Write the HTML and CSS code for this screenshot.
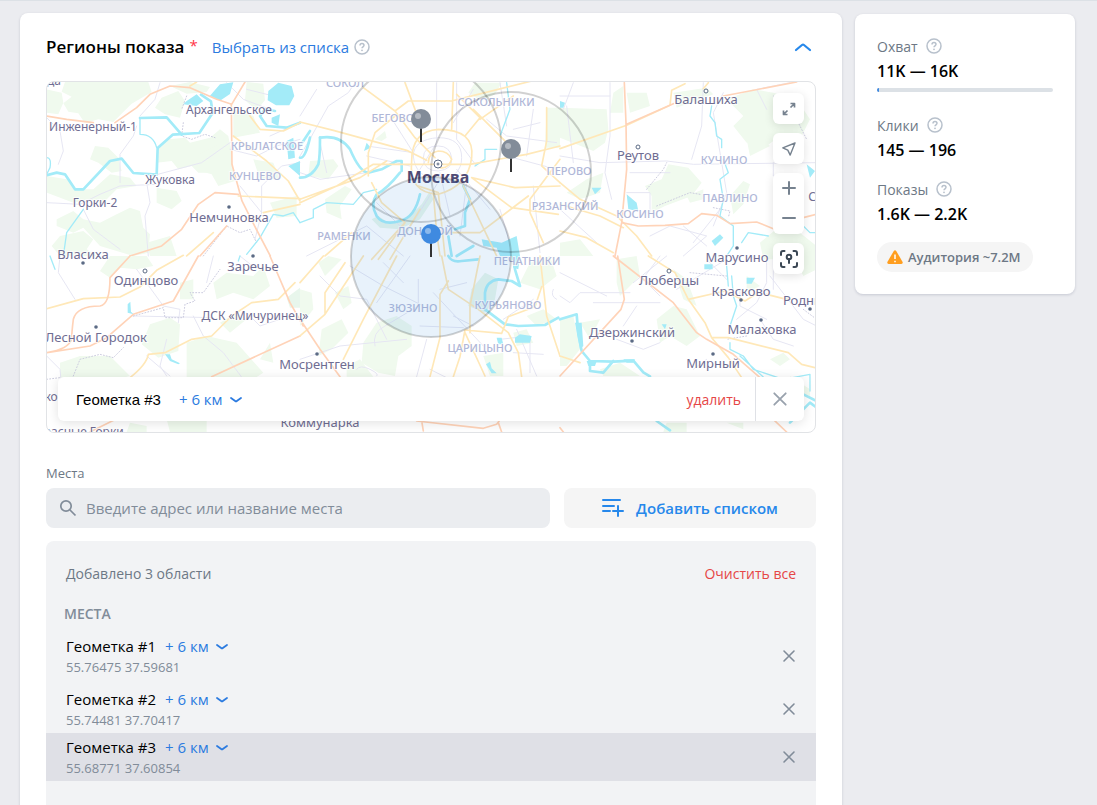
FILE: index.html
```html
<!DOCTYPE html>
<html lang="ru">

<head>
    <meta charset="UTF-8">
    <meta name="viewport" content="width=device-width, initial-scale=1.0">
    <title>Регионы показа</title>
    <link rel="stylesheet" href="styles.css">
</head>

<body>
    <!-- shared icons -->
    <svg class="sprite" width="0" height="0" aria-hidden="true">
        <symbol id="help" viewBox="0 0 16 16">
            <circle cx="8" cy="8" r="7" fill="none" stroke="currentColor" stroke-width="1.5" />
            <path d="M6 6.4C6 5.2 6.9 4.5 8 4.5s2 .7 2 1.8c0 1.5-2 1.5-2 3" fill="none" stroke="currentColor" stroke-width="1.5" />
            <circle cx="8" cy="11.3" r=".9" fill="currentColor" />
        </symbol>
        <symbol id="chevron" viewBox="0 0 12 8">
            <path d="M1 2l4.2 3q.8.6 1.6 0L11 2" fill="none" stroke="currentColor" stroke-width="1.8" stroke-linecap="round" />
        </symbol>
        <symbol id="cross" viewBox="0 0 14 14">
            <path d="M2 2l10 10M12 2L2 12" fill="none" stroke="currentColor" stroke-width="1.6" stroke-linecap="round" />
        </symbol>
    </svg>

    <div class="page">
        <main class="card regions">
            <header class="regions-head">
                <h1>Регионы показа</h1>
                <span class="required">*</span>
                <a href="#list" class="pick">Выбрать из списка</a>
                <button type="button" class="help" aria-label="Справка"><svg><use href="#help" /></svg></button>
                <button type="button" class="collapse" aria-label="Свернуть">
                    <svg viewBox="0 0 18 10"><path d="M2 8l6-5q1-.8 2 0l6 5" fill="none" stroke="currentColor" stroke-width="2.2" stroke-linecap="round" /></svg>
                </button>
            </header>

            <div class="map">
                <svg class="map-canvas" viewBox="1 1 768 350" preserveAspectRatio="xMidYMid slice">
                    <!-- tile 0:0 -->
                    <g transform="translate(-6 -5) scale(.3333)">
                        <g class="park">
                            <path d="M75 18h250l10 30-60 35-55 55-45-8-40 12-20-30-30-5-15-25 25-20-30-15z" />
                            <path d="M20 40l45 10 5 30-15 35-35-5zM165 210l40 5 30 30 10 40-30 5-40-30-25-10z" />
                            <path d="M365 65l50-20 20 30-15 50-45-10-30-20zM390 30l60-12 60 15-10 15-60 5z" />
                            <path d="M355 215l30-25 50-5 15 15 60-15 30-25 25 20 10 50-30 20-20 40-50 0-20-20-40 10-20-25-45 5z" />
                            <path d="M475 235l60-30 35 0 15 110-50 15-20-35-35-10zM580 100l60 20 20 50-80 15z" />
                            <path d="M620 18l50 5 5 50-25 30-35-30zM640 250l60 10 20 50-60 0zM690 380l80-20v60l-60 5z" />
                            <path d="M20 300l60 10 30 30 50 0 50-45 60 10 20 25-60 10-40 40-40-10-50 10-80-30z" />
                            <path d="M50 430l50-25 30 25 50 10 50-25 40-20 30 10 10 50 20 20-5 55-45 10-100-30-50-55-30 15-50-20z" />
                            <path d="M60 480l70-15 30 25-20 30 30 20h-110l-25-30zM350 335l60 10 15 30-30 25-45-20zM320 500l70-20 20 60h-80z" />
                        </g>
                        <g class="lane">
                            <path d="M20 125l40 40 10 60-15 40M300 120l45-50 15-50M240 320v-85l40-55 10-30M20 380l100 5 60-30 60-25 110-5M335 300l150-40 85-60M320 320l10 60-15 40 10 120M130 400l30 60 80 60M570 220l80 20 60-30 70-20M620 40l80 20M665 410v-80l60-60 55-10M690 180l90-40M600 330l65 80-20 80M560 20l50 50 80 30" />
                        </g>
                        <path class="lane dotted" d="M430 140l-5 40 30 10 40-15 30 10M440 60l-15 40M490 540l70-90 40 20 30-10 20 40" />
                        <g class="river">
                            <path d="M20 298l30-8 25 5 30 45h25l80-85 35-7 35 43 70 5 3-80 45-40 80-5 40-60-5-35-30-20" />
                            <path d="M780 140l-40 15-60-5-20-30 15-20 30 5" />
                        </g>
                        <path class="river small" d="M350 215q-10-40-50-40v-45" />
                        <path class="river" d="M300 126l80-2 45 52" />
                        <path class="river small" d="M130 400l-50 70-10 70M20 245q15 0 10 30l-10 20M780 440l-20-30-30 10-30-5-40 70-40 50" />
                        <g class="water">
                            <path d="M685 45l30-25 40 10 8 30-15 28-40 0-25-15zM540 25l40-6-10 35-30 20-30-15zM440 75l30-20 20 20-20 15-40-5zM695 125l25-10-5 35-20-10zM740 195l20-10 5 60-20 5zM745 270l35-15v45z" />
                        </g>
                        <g class="road-yellow">
                            <path d="M580 180l100 75 65 60 35 60M595 360l185 8M630 120l30 40 70 5 50-25M670 410l110-25M440 540l80-70M450 30l20-12" />
                        </g>
                        <g class="road">
                            <path d="M20 120l60 10 80 10M225 140l65-45 40-40 60-25 60 5 80 35 45 15 40-67M574 85l2 180 30 110 30 60 55 105M595 355l-70-5-50 35-50 75-60 50-95 30M560 450l-80 90" />
                        </g>
                    </g>
                    <!-- tile 1:0 -->
                    <g transform="translate(254 -5) scale(.3333)">
                        <g class="park">
                            <path d="M505 50l20-30h80l-20 35-40 20zM740 95h40v120h-45zM30 255l70-5 15 20-30 40-60-10zM75 370l60-40 20 10-35 50 5 40-45-20z" />
                            <path d="M225 190l30-25 5 20-15 10z" />
                        </g>
                        <path class="park deep" d="M215 430l20-10 30 20 50-5 50-50 25-40 10 25-40 60-60 30-60-5z" />
                        <g class="lane">
                            <path d="M0 240l35-60 50-90 60-40 20-30M0 120l50-80M410 20v180l-50 80M470 20v170l60 80M340 240q0-50 75-55 70 0 70 60t-70 65q-70-5-75-70zM370 245q0-35 45-35 35 0 40 35t-40 40q-45 0-45-40z" />
                            <path d="M200 210l140 20M600 20l20 130M560 130l60 50 150 20M620 240l150 40M460 140l60-100M270 120l70 110M200 240l130 30M0 290l60 20 140-20M640 160l80-20M700 100l-20 140M60 200l20 90M420 290l30 130M470 280l100 120M230 380l100 100M420 310l-100 160M500 320l-20 160M20 540l180-90 110 90M600 400l40 140M700 330l20 200" />
                        </g>
                        <g class="river">
                            <path d="M0 210l30-45M30 185q-15 65-30 60M60 185q60-10 90 35 30 70 55 70l40-10 45-25h15v30M300 290q-40 50-70 65-20 30 0 65 20 30 70 15 45-10 60-80M490 330l20 40-15 40v40l-30 10" />
                            <path d="M60 185q0 60-5 80-20 40-55 40M445 480l10 60M470 540l50-30" />
                        </g>
                        <path class="river small" d="M0 440l40-15 0-25 40-20 80 5 30-35 40-10M620 20l10 80-30 80M590 220h-35v30l-30 20" />
                        <path class="water" d="M545 490l60 10 45-20 10 60h-60l-10-25-40-5zM200 200l12 15-20 10z" />
                        <g class="road-yellow">
                            <path d="M0 138l100 25 220 60 60 30M190 35l95 70 40-30h130l40-10 200-50M285 105l60 80 60 60M360 140l-45-120M460 20l-5 140" />
                            <path d="M335 255q0-90 80-95 110 0 100 85t-100 110q-90-5-80-100zM385 260q0-30 30-35 30 0 40 25-10 30-35 25" />
                            <path d="M0 380l110-50 110-65 110 0 180 0 170-30 100-25M0 370l180-65 80-50M205 300l0-70 20-60 60-50M520 100l100 100M470 55l70 70-45 55M640 60l-100 70M740 95l0 100-15 75 55 50M780 250l-90 120 0 40 40 90M515 305l120 90 140 20M515 305l130 30 135-5M215 320l30 60 70 60-100 110M400 350l10 120 10 70M355 330l60 20 20 190M315 440l-80 110M360 400l-90 150M540 470l145-110M430 470l110 0M75 540l80-70M490 330l100 210" />
                        </g>
                    </g>
                    <!-- tile 2:0 -->
                    <g transform="translate(514 -5) scale(.3333)">
                        <g class="park">
                            <path d="M0 95l140 5 5 60-10 40-35 25-100-40zM20 350l60-40 50-20-10 60-60 20zM160 50l30-20v80l-40 0zM200 50l60 0 10 40-60 20z" />
                            <path d="M255 330l50-20 20-45 60 10 40 45-30 40-80 30-40 20 0-50zM340 50l100-15 20 20-110 40z" />
                            <path d="M500 70l80-30 60 10 70 20 40 60-30 60-60-10-40 30-60-10-40-50 30-30zM510 360l40-45 20 10-20 60-30 30zM560 190l30-20 40 40-60 30z" />
                            <path d="M0 500l60-10 40 50h-100zM600 500l60-50 60 20 50 40v40h-160zM380 360l50-20v30l-40 10z" />
                        </g>
                        <g class="lane">
                            <path d="M0 60l150 0M40 20l-30 80M20 90l20 170M150 20v160l-15 110 20 80M0 240l120 20 200-5 80 10 370-5M430 20l-5 130-30 100M490 50l-30 60 40 240-40 100M210 290l120 0M0 400l110 100M370 450l70 60M640 260v40h50M200 350h70v60M620 100l-30-60 100-20M400 500l80-100M270 480l60-30 110 30-70 60" />
                        </g>
                        <path class="lane dotted" d="M260 340l50-60 10-20M290 390l100-40 30 5M460 395l50 10-5 20M640 60l60 50 40 80" />
                        <path class="river small" d="M455 90l-5 30 15 20 5 40 15 10v25M490 250l15 40-25 20 10 60-10 50 40 30 0 60-20 30M545 500l20-30 60 10M730 450l20 20 30 0" />
                        <path class="water" d="M200 355l30 25 5 25-30-5zM95 335l30 0-20 20zM740 265l25 20-15 20zM455 495l25-20 10 10-25 25zM0 75l15 5-5 15-10 0z" />
                        <g class="road-yellow">
                            <path d="M0 218l200-70 130-60 5-45 40-20M430 38l15-18M0 320l60 50 110 50 60 60 45 60M0 385l120 35 70 35M0 465l80 20 80 45" />
                        </g>
                        <g class="road">
                            <path d="M193 20l5 120 2 140-15 160-20 100M200 145l140-62M490 60l220-42M185 440l50 10 80-2 70-5 40-30 45 5 40 25 80-5 50 20h30M730 425l40-10" />
                        </g>
                    </g>
                    <!-- tile 0:1 -->
                    <g transform="translate(-6 175) scale(.3333)">
                        <g class="park">
                            <path d="M180 45l30-45h110l20 30-50 10-50-5-30 30zM420 80l40-10 0 60-40 0zM330 205l60-20 30 20-5 80-60 20-50-40zM520 80l40-30 80 10 30-30 20 60-50 40-60-20-50 20z" />
                            <path d="M440 260l60-20 90 20 80 90-60 40-60-20-40 30-70-10zM60 320l60-20 90 0 60 60-40 10-170-5zM540 200l50-30 30 20-50 40zM660 310l30-50 10 60zM380 490h120v38h-110zM270 500l50 10v18h-60z" />
                        </g>
                        <path class="park deep" d="M740 125l40-30v60h-30z" />
                        <g class="lane">
                            <path d="M60 0l-5 50 50 80M290 40l80 110 50 10-5 40M380 250l-20 80 20 30M460 180l30 60 60 50 60 80M520 0l-20 80M600 0l50 40M280 180l240 5M20 300l40 40 5 50M320 300l70 60M620 170l40 40 60-20" />
                        </g>
                        <path class="lane dotted" d="M100 360l20-50 60-15 40 10 30-30M280 180l90-25 5 30 55 0 5-40 30-10-15-25 40 0 50-70M20 370l40-5" />
                        <path class="river small" d="M30 0l15 40M600 0l-5 15" />
                        <path class="water" d="M263 145l8-8 2 30 8 8-18-5zM375 295h15l5 15 25 12-5 3-25-10z" />
                        <g class="road-yellow">
                            <path d="M20 158l110-30 110-5 60-30 50-50 80-45M270 365q50-40 55-70l50-5 80-40 60-10 60-60 60-40 80-10 50-50" />
                        </g>
                        <g class="road">
                            <path d="M270 0l-60 65q0 80-30 85-70 0-80 40-5 40-5 60-10 30-75 40l130-20 50-25 80-70 120-40 75-135M515 362l265-122M690 0l60 140 40 70M150 528l80-40" />
                        </g>
                    </g>
                    <!-- tile 1:1 -->
                    <g transform="translate(254 175) scale(.3333)">
                        <g class="park">
                            <path d="M0 100l35 10 5 50-40 50zM55 20l30-20 40 10-50 50zM105 110l40-20 10 50-25 20zM65 220l60-30 20 40-50 50-40 20zM190 260l40-60 60-20 45 30 0 60-40 30-10 60-50-10-50-30z" />
                            <path d="M550 300l60-10 0 70h-40zM640 230l40-10 20 40-50 10zM660 80l30-60 60-20 20 60-50 40zM140 330l40-20 40 52h-80zM680 180l50-20 40 30-60 20z" />
                        </g>
                        <path class="park deep" d="M515 100l40-50 40 20-10 60-30 40-50-20z" />
                        <g class="lane">
                            <path d="M60 60l60 60 80 10 60 120M225 270q-10-40 30-60l100-60 0-80M380 250l-30 112M0 310l120-40 200-20M150 30l100 60 120 60M250 20l60 60M330 0l-100 140M420 100l80-20M400 110l150 160M360 210l130 5M460 180l60 30M640 290l90 5M650 220l60 140M600 250l90-10 0 110M760 100q-10 20 10 30M390 340l50 25M700 130l-90 60M170 340q10-15 40 0t20 20" />
                        </g>
                        <g class="river">
                            <path d="M445 0q10 20 40 15l50-5M640 0l5 40 15 50-25-15-40-5q-35 5-40 40l0 50 60 45 40 5 80-3 40-22" />
                        </g>
                        <path class="water" d="M645 245l15-10 35 5-5 20-45 0zM590 245h15l5 20-15 0zM558 325l12-8 5 20 15 15-15 0zM635 0h25l-5 40-15-5z" />
                        <g class="road-yellow">
                            <path d="M0 80l70-80M0 240l75-65 0-65 60-90M190 0l-115 175M130 310l60-120 100-190M425 0l20 100 90 60 90 70 30 60 10 72M445 75l-25 40 0 130-30 117M510 230l0-80 30-150M460 362l20-60 15-80 110 10 20-50 80-30 20-60M495 230l60 130M720 0l20 180 40 120" />
                        </g>
                        <g class="road">
                            <path d="M0 190l60 90 60 82M350 495l200 22 40-12 15-20M365 495l5 30M595 500l10 28" />
                        </g>
                    </g>
                    <!-- tile 2:1 -->
                    <g transform="translate(514 175) scale(.3333)">
                        <g class="park">
                            <path d="M170 10l60-10 10 60-60 60-10-40zM0 190l40-10 20 100-40 50-20 0zM290 190l50-40 40 10 40 80-40 30-50-30-30 20zM630 310l40-20 20 20-30 20zM700 0h70v40l-40 20zM60 200l60-10-30 60zM560 60l40 30-40 20zM340 40l40 30 30 80-40-20zM120 340l60-20 60 40h-110zM690 360l60 40v20l-40-10z" />
                            <path d="M320 500h60v28h-70zM500 500h50v20z" />
                        </g>
                        <g class="lane">
                            <path d="M0 50l140 70M100 140h200M220 80l100-80M300 0l-60 80M240 60l60 60M530 190l60-50 30-60 0-80M440 10l60 60M600 190l40 60 60 20M630 60l100 130 40 20M540 100v50l80 40M190 210l40-60M170 250l80 30 50-20M400 340l40-30M0 120l30 20 30-30 150 0M350 100l150-90M640 0v100" />
                        </g>
                        <path class="lane dotted" d="M390 50l110 10M560 240l-60 10M730 160l40 30" />
                        <g class="river">
                            <path d="M0 190l50-15 5 60 10 50 25 30 70 2 60-3 30 35 20 12M90 320v25l40 5 30-35M290 495l40 28M690 500l60-60 20 15M730 415l40 20" />
                        </g>
                        <path class="river small" d="M500 30l5 60M515 60l5 60 10 30-20 60M510 260l0 20 40 20 30 40 90 30 80-15 0 50M540 300l100 90" />
                        <path class="water" d="M433 25h25v15h-25zM560 65l25 0-10 18-15 0zM305 205l15 0-5 15zM45 200l20 0 5 70-10 10zM80 315h30l-5 15h-20zM190 310h35l-5 10h-20z" />
                        <g class="road-yellow">
                            <path d="M265 0l80 50 40 80 50 70 20 45h50l180 45 40 35 40 10M385 130l110-25 60 30 40-25M620 115l60 15M455 245l50 60 40 60M0 300l60 20" />
                        </g>
                        <g class="road">
                            <path d="M160 0l180 140 70 90 30 20 80 45 80 70M173 0l20 130-10 30-183 200M640 490l40 38M0 515l10 13" />
                        </g>
                    </g>

                    <g class="districts">
                        <text x="221" y="69">КРЫЛАТСКОЕ</text>
                        <text x="209" y="99">КУНЦЕВО</text>
                        <text x="299" y="6">СОКОЛ</text>
                        <text x="450" y="25">СОКОЛЬНИКИ</text>
                        <text x="351" y="41">БЕГОВОЙ</text>
                        <text x="298" y="159">РАМЕНКИ</text>
                        <text x="379" y="154">ДОНСКОЙ</text>
                        <text x="523" y="94">ПЕРОВО</text>
                        <text x="519" y="129">РЯЗАНСКИЙ</text>
                        <text x="481" y="184">ПЕЧАТНИКИ</text>
                        <text x="367" y="231">ЗЮЗИНО</text>
                        <text x="462" y="228">КУРЬЯНОВО</text>
                        <text x="434" y="271">ЦАРИЦЫНО</text>
                        <text x="678" y="83">КУЧИНО</text>
                        <text x="684" y="121">ПАВЛИНО</text>
                        <text x="594" y="137">КОСИНО</text>
                    </g>
                    <g class="towns">
                        <text x="8" y="4">да</text>
                        <text x="47" y="50">Инженерный-1</text>
                        <text x="183" y="33">Архангельское</text>
                        <text x="124" y="103">Жуковка</text>
                        <text x="49" y="126">Горки-2</text>
                        <text x="209" y="239">ДСК «Мичуринец»</text>
                        <text x="34" y="355">Красные Горки</text>
                        <text x="5" y="320">ко</text>
                        <text x="766" y="120">С</text>
                    </g>
                    <g class="towns large">
                        <text x="183" y="141">Немчиновка</text>
                        <text x="37" y="178">Власиха</text>
                        <text x="207" y="190">Заречье</text>
                        <text x="100" y="204">Одинцово</text>
                        <text x="50" y="261">Лесной Городок</text>
                        <text x="271" y="288">Мосрентген</text>
                        <text x="274" y="346">Коммунарка</text>
                        <text x="660" y="23">Балашиха</text>
                        <text x="592" y="79">Реутов</text>
                        <text x="691" y="181">Марусино</text>
                        <text x="623" y="204">Люберцы</text>
                        <text x="695" y="215">Красково</text>
                        <text x="764" y="224">Родники</text>
                        <text x="586" y="256">Дзержинский</text>
                        <text x="716" y="253">Малаховка</text>
                        <text x="667" y="287">Мирный</text>
                    </g>
                    <g class="dots">
                        <circle cx="183" cy="126" r="1.8" />
                        <circle cx="37" cy="182" r="1.8" />
                        <circle cx="207" cy="175" r="1.8" />
                        <circle cx="50" cy="246" r="1.8" />
                        <circle cx="271" cy="273" r="1.8" />
                        <circle cx="691" cy="167" r="1.8" />
                        <circle cx="695" cy="219" r="1.8" />
                        <circle cx="764" cy="228" r="1.8" />
                        <circle cx="586" cy="260" r="1.8" />
                        <circle cx="715" cy="239" r="1.8" />
                        <circle cx="667" cy="273" r="1.8" />
                    </g>
                    <g class="rings">
                        <circle cx="99" cy="190" r="2" />
                        <circle cx="660" cy="10" r="2" />
                        <circle cx="592" cy="66" r="2" />
                        <circle cx="623" cy="190" r="2" />
                        <circle cx="392" cy="83" r="4" />
                        <circle cx="392" cy="83" r="1" />
                    </g>
                    <text class="capital" x="392" y="102">Москва</text>

                    <!-- geo tags, 6 km each -->
                    <g class="zone">
                        <circle cx="375" cy="61" r="80" />
                        <circle cx="465" cy="91" r="80" />
                        <circle class="active" cx="385" cy="176" r="80" />
                    </g>
                    <g class="pin">
                        <path d="M375 46v15M465 76v15M385 160v16" />
                        <circle cx="375" cy="38" r="10" />
                        <circle cx="465" cy="68" r="10" />
                        <circle class="active" cx="385" cy="153" r="10" />
                        <g class="shine">
                            <circle cx="372" cy="35" r="3" />
                            <circle cx="462" cy="65" r="3" />
                            <circle cx="382" cy="150" r="3" />
                        </g>
                    </g>
                </svg>

                <div class="map-controls">
                    <button type="button" aria-label="Во весь экран">
                        <svg viewBox="0 0 16 16"><path class="arrows" d="M9.500 6.500l4-4M9.500 2.500h4v4M6.500 9.500l-4 4M2.500 9.500v4h4" /></svg>
                    </button>
                    <button type="button" aria-label="Моё местоположение">
                        <svg viewBox="0 0 16 16"><path d="M14 2L1.800 6.800l5 2.300 2.400 5z" /></svg>
                    </button>
                    <div class="zoom">
                        <button type="button" aria-label="Приблизить">
                            <svg viewBox="0 0 16 16"><path class="thick" d="M8 2v12M2 8h12" /></svg>
                        </button>
                        <button type="button" aria-label="Отдалить">
                            <svg viewBox="0 0 16 16"><path class="thick" d="M2 8h12" /></svg>
                        </button>
                    </div>
                    <button type="button" class="locate" aria-label="Поставить метку">
                        <svg viewBox="0 0 20 20">
                            <path d="M2 6V4q0-2 2-2h1.500M14.500 2h1.500q2 0 2 2v2M18 14v2q0 2-2 2h-1.500M5.500 18H4q-2 0-2-2v-2M10 10v4" />
                            <circle cx="10" cy="8" r="2.300" />
                        </svg>
                    </button>
                </div>

                <div class="selected">
                    <span class="selected-name">Геометка #3</span>
                    <span class="radius">
                        <select aria-label="Радиус выбранной геометки">
                            <option>+ 6 км</option>
                            <option>+ 1 км</option>
                            <option>+ 3 км</option>
                        </select>
                        <svg><use href="#chevron" /></svg>
                    </span>
                    <button type="button" class="delete">удалить</button>
                    <button type="button" class="close" aria-label="Закрыть"><svg><use href="#cross" /></svg></button>
                </div>
            </div>

            <label class="field-label" for="place">Места</label>
            <div class="search-row">
                <div class="search">
                    <svg viewBox="0 0 18 18"><circle cx="7" cy="7" r="5.200" /><path d="M11 11l5.500 5.500" /></svg>
                    <input type="text" id="place" placeholder="Введите адрес или название места">
                </div>
                <button type="button" class="add-list">
                    <svg viewBox="0 0 22 20"><path d="M1 2h17M1 8h11M1 13h7M11 13h10M16 8v10" /></svg>
                    Добавить списком
                </button>
            </div>

            <section class="places" id="list">
                <div class="places-head">
                    <span>Добавлено 3 области</span>
                    <button type="button" class="clear">Очистить все</button>
                </div>
                <h2>МЕСТА</h2>
                <ul>
                    <li class="place">
                        <div>
                            <div class="place-title">
                                <span>Геометка #1</span>
                                <span class="radius">
                                    <select aria-label="Радиус геометки 1">
                                        <option>+ 6 км</option>
                                        <option>+ 1 км</option>
                                        <option>+ 3 км</option>
                                    </select>
                                    <svg><use href="#chevron" /></svg>
                                </span>
                            </div>
                            <p>55.76475 37.59681</p>
                        </div>
                        <button type="button" class="remove" aria-label="Удалить геометку 1"><svg><use href="#cross" /></svg></button>
                    </li>
                    <li class="place">
                        <div>
                            <div class="place-title">
                                <span>Геометка #2</span>
                                <span class="radius">
                                    <select aria-label="Радиус геометки 2">
                                        <option>+ 6 км</option>
                                        <option>+ 1 км</option>
                                        <option>+ 3 км</option>
                                    </select>
                                    <svg><use href="#chevron" /></svg>
                                </span>
                            </div>
                            <p>55.74481 37.70417</p>
                        </div>
                        <button type="button" class="remove" aria-label="Удалить геометку 2"><svg><use href="#cross" /></svg></button>
                    </li>
                    <li class="place current">
                        <div>
                            <div class="place-title">
                                <span>Геометка #3</span>
                                <span class="radius">
                                    <select aria-label="Радиус геометки 3">
                                        <option>+ 6 км</option>
                                        <option>+ 1 км</option>
                                        <option>+ 3 км</option>
                                    </select>
                                    <svg><use href="#chevron" /></svg>
                                </span>
                            </div>
                            <p>55.68771 37.60854</p>
                        </div>
                        <button type="button" class="remove" aria-label="Удалить геометку 3"><svg><use href="#cross" /></svg></button>
                    </li>
                </ul>
            </section>
        </main>

        <aside class="card forecast">
            <dl>
                <div class="metric">
                    <dt>Охват <button type="button" class="help" aria-label="Что такое охват"><svg><use href="#help" /></svg></button></dt>
                    <dd>11K — 16K</dd>
                    <dd class="bar"><span style="width: 1%"></span></dd>
                </div>
                <div class="metric">
                    <dt>Клики <button type="button" class="help" aria-label="Что такое клики"><svg><use href="#help" /></svg></button></dt>
                    <dd>145 — 196</dd>
                </div>
                <div class="metric">
                    <dt>Показы <button type="button" class="help" aria-label="Что такое показы"><svg><use href="#help" /></svg></button></dt>
                    <dd>1.6K — 2.2K</dd>
                </div>
            </dl>
            <div class="audience">
                <svg viewBox="0 0 16 14">
                    <path d="M6.800.9q1.200-1.500 2.400 0l6.400 11q.6 1.800-1.200 2H1.600Q-.2 13.700.4 11.900z" fill="#ff9e1f" />
                    <path d="M8 4.500v4.500M8 10.700v1.500" stroke="#fff" stroke-width="1.500" />
                </svg>
                Аудитория ~7.2M
            </div>
        </aside>
    </div>
</body>

</html>
```
FILE: styles.css
```css
* {
    margin: 0;
    padding: 0;
    box-sizing: border-box;
}

body {
    background-color: #ebecf0;
    border-top: 1px solid #dce1e6;
    font-family: "Open Sans", "Noto Sans", sans-serif;
    font-size: 15px;
    color: #000;
}

button,
input,
select {
    font: inherit;
    color: inherit;
    border: none;
    background: none;
}

button,
select {
    cursor: pointer;
}

svg {
    display: block;
    flex: none;
}

.sprite {
    position: absolute;
}

.page {
    display: grid;
    grid-template-columns: minmax(0, 1fr) 220px;
    gap: 13px;
    align-items: start;
    padding: 12px 22px 0 20px;
}

.card {
    background-color: #fff;
    border-radius: 8px;
    box-shadow: 0 1px 3px rgba(0, 20, 61, 0.16);
}

/* header */

.regions {
    padding: 0 26px 40px;
}

.regions-head {
    display: flex;
    align-items: center;
    height: 68px;
}

.regions-head h1 {
    padding-bottom: 2px;
    font-size: 17px;
    font-weight: 600;
}

.required {
    margin: 0 14px 0 5px;
    padding-bottom: 4px;
    color: #ff3347;
}

.pick {
    font-size: 15px;
    color: #2c7be0;
    text-decoration: none;
}

.help {
    margin-left: 5px;
    color: #b8c1cc;
}

.help svg {
    width: 16px;
    height: 16px;
}

.collapse {
    margin-left: auto;
    padding: 4px;
    color: #2688eb;
}

.collapse svg {
    width: 18px;
    height: 10px;
}

/* map */

.map {
    position: relative;
    height: 352px;
    border: 1px solid #e1e3e6;
    border-radius: 8px;
    overflow: hidden;
}

.map-canvas {
    width: 100%;
    height: 100%;
    font-family: "Noto Sans", sans-serif;
    text-anchor: middle;
}

.park {
    fill: #f0faee;
}

.park.deep {
    fill: #e8f6ec;
}

.water {
    fill: #a3ebf8;
}

.river,
.lane,
.road,
.road-yellow {
    fill: none;
    stroke-linejoin: round;
    stroke-linecap: round;
}

.river {
    stroke: #a3ebf8;
    stroke-width: 8;
}

.river.small {
    stroke-width: 4;
}

.lane {
    stroke: #e6e6f3;
    stroke-width: 3;
}

.dotted {
    stroke: #ccccdf;
    stroke-dasharray: 3 6;
}

.road {
    stroke: #ffd3b8;
    stroke-width: 5;
}

.road-yellow {
    stroke: #ffe8b8;
    stroke-width: 5;
}

.map-canvas text {
    paint-order: stroke;
    stroke: #fff;
    stroke-width: 2px;
    stroke-opacity: 0.7;
}

.districts {
    font-size: 11px;
    font-weight: 500;
    fill: #b0b7d8;
}

.towns {
    font-size: 12px;
    fill: #6f6d92;
}

.towns.large {
    font-size: 13px;
}

.capital {
    font-size: 16px;
    font-weight: 700;
    fill: #4f4b75;
}

.dots {
    fill: #5c6b85;
}

.rings {
    fill: #fff;
    stroke: #5c6b85;
}

.zone {
    fill: none;
    stroke: rgba(0, 0, 0, 0.18);
    stroke-width: 2;
}

.zone .active {
    fill: rgba(63, 148, 224, 0.12);
}

.pin {
    fill: #828c99;
    stroke: none;
}

.pin path {
    stroke: #333;
    stroke-width: 2;
}

.pin .active {
    fill: #3f8ae0;
}

.shine {
    fill: rgba(255, 255, 255, 0.4);
}

.map-controls {
    position: absolute;
    top: 11px;
    right: 11px;
    display: flex;
    flex-direction: column;
    gap: 9px;
}

.map-controls > * {
    background-color: #fff;
    border-radius: 6px;
    box-shadow: 0 2px 10px rgba(0, 0, 0, 0.12);
}

.map-controls button {
    display: flex;
    align-items: center;
    justify-content: center;
    width: 31px;
    height: 31px;
}

.map-controls .zoom {
    padding-bottom: 1px;
}

.map-controls .zoom button {
    height: 30px;
}

.map-controls svg {
    width: 16px;
    height: 16px;
    fill: none;
    stroke: #76828f;
    stroke-width: 1.4;
    stroke-linejoin: round;
}

.map-controls .arrows {
    stroke-width: 1.7;
}

.map-controls .thick {
    stroke-width: 2;
    stroke-linecap: round;
}

.map-controls .locate svg {
    width: 20px;
    height: 20px;
    stroke: #3b4754;
    stroke-width: 2;
    stroke-linecap: round;
}

.selected {
    position: absolute;
    left: 11px;
    right: 11px;
    bottom: 11px;
    display: flex;
    align-items: center;
    height: 44px;
    padding-left: 18px;
    background-color: #fff;
    border-radius: 6px;
    box-shadow: 0 2px 12px rgba(0, 0, 0, 0.12);
}

.selected-name {
    margin-right: 18px;
    font-family: "Liberation Sans", Arial, sans-serif;
}

.radius {
    display: flex;
    align-items: center;
    gap: 7px;
    color: #2c7be0;
}

.radius select {
    appearance: none;
}

.radius svg {
    width: 12px;
    height: 8px;
    margin-top: 2px;
}

.delete,
.clear {
    margin-left: auto;
    font-size: 14px;
    color: #e64646;
}

.close {
    display: flex;
    align-items: center;
    justify-content: center;
    width: 49px;
    height: 100%;
    margin-left: 14px;
    border-left: 1px solid #dfe1e6;
    color: #99a2ad;
}

.close svg {
    width: 16px;
    height: 16px;
}

/* search */

.field-label {
    display: block;
    margin: 30px 0 5px;
    font-size: 13px;
    line-height: 20px;
    color: #6d7885;
}

.search-row {
    display: flex;
    gap: 14px;
}

.search {
    display: flex;
    flex: 1;
    align-items: center;
    gap: 9px;
    height: 40px;
    padding: 0 13px;
    background-color: #ebedf0;
    border-radius: 8px;
}

.search svg {
    width: 18px;
    height: 18px;
    fill: none;
    stroke: #818c99;
    stroke-width: 1.7;
}

.search input {
    flex: 1;
    min-width: 0;
    height: 100%;
    outline: none;
}

.search input::placeholder {
    color: #818c99;
}

.add-list {
    display: flex;
    align-items: center;
    justify-content: center;
    gap: 12px;
    width: 252px;
    background-color: #f5f5f5;
    border-radius: 8px;
    font-weight: 600;
    color: #2688eb;
}

.add-list svg {
    width: 22px;
    height: 20px;
    fill: none;
    stroke: currentColor;
    stroke-width: 2;
    stroke-linecap: round;
}

/* added places */

.places {
    margin-top: 13px;
    padding: 21px 0 40px;
    background-color: #f2f3f5;
    border-radius: 8px;
}

.places-head {
    display: flex;
    align-items: center;
    height: 22px;
    padding: 0 20px;
    font-size: 14px;
    color: #6d7885;
}

.places h2 {
    margin: 20px 0 8px 18px;
    font-size: 14px;
    line-height: 20px;
    font-weight: 600;
    color: #818c99;
}

.places ul {
    display: flex;
    flex-direction: column;
    gap: 5px;
    list-style: none;
}

.place {
    display: flex;
    align-items: center;
    justify-content: space-between;
    height: 48px;
    padding: 0 20px;
}

.place.current {
    margin-top: -5px;
    background-color: #dfe0e6;
}

.place-title {
    display: flex;
    align-items: center;
    gap: 9px;
    height: 22px;
}

.place p {
    font-size: 13px;
    line-height: 20px;
    color: #818c99;
}

.remove {
    color: #818c99;
}

.remove svg {
    width: 14px;
    height: 14px;
}

/* forecast */

.forecast {
    margin-top: 1px;
    padding: 21px 22px 22px;
}

.metric {
    margin-bottom: 14px;
}

.metric dt {
    display: flex;
    align-items: center;
    gap: 3px;
    height: 22px;
    font-size: 14px;
    color: #6d7885;
}

.metric dd {
    font-size: 16px;
    font-weight: 600;
    line-height: 28px;
}

.metric .bar {
    height: 4px;
    margin: 3px 0 22px;
    background-color: #dce1e6;
    border-radius: 2px;
    overflow: hidden;
}

.bar span {
    display: block;
    height: 100%;
    background-color: #3f8ae0;
}

.audience {
    display: inline-flex;
    align-items: center;
    gap: 5px;
    height: 30px;
    padding: 0 12px 0 10px;
    background-color: #f5f5f5;
    border-radius: 15px;
    font-size: 13px;
    font-weight: 600;
    color: #6d7885;
}

.audience svg {
    width: 16px;
    height: 14px;
}
```
